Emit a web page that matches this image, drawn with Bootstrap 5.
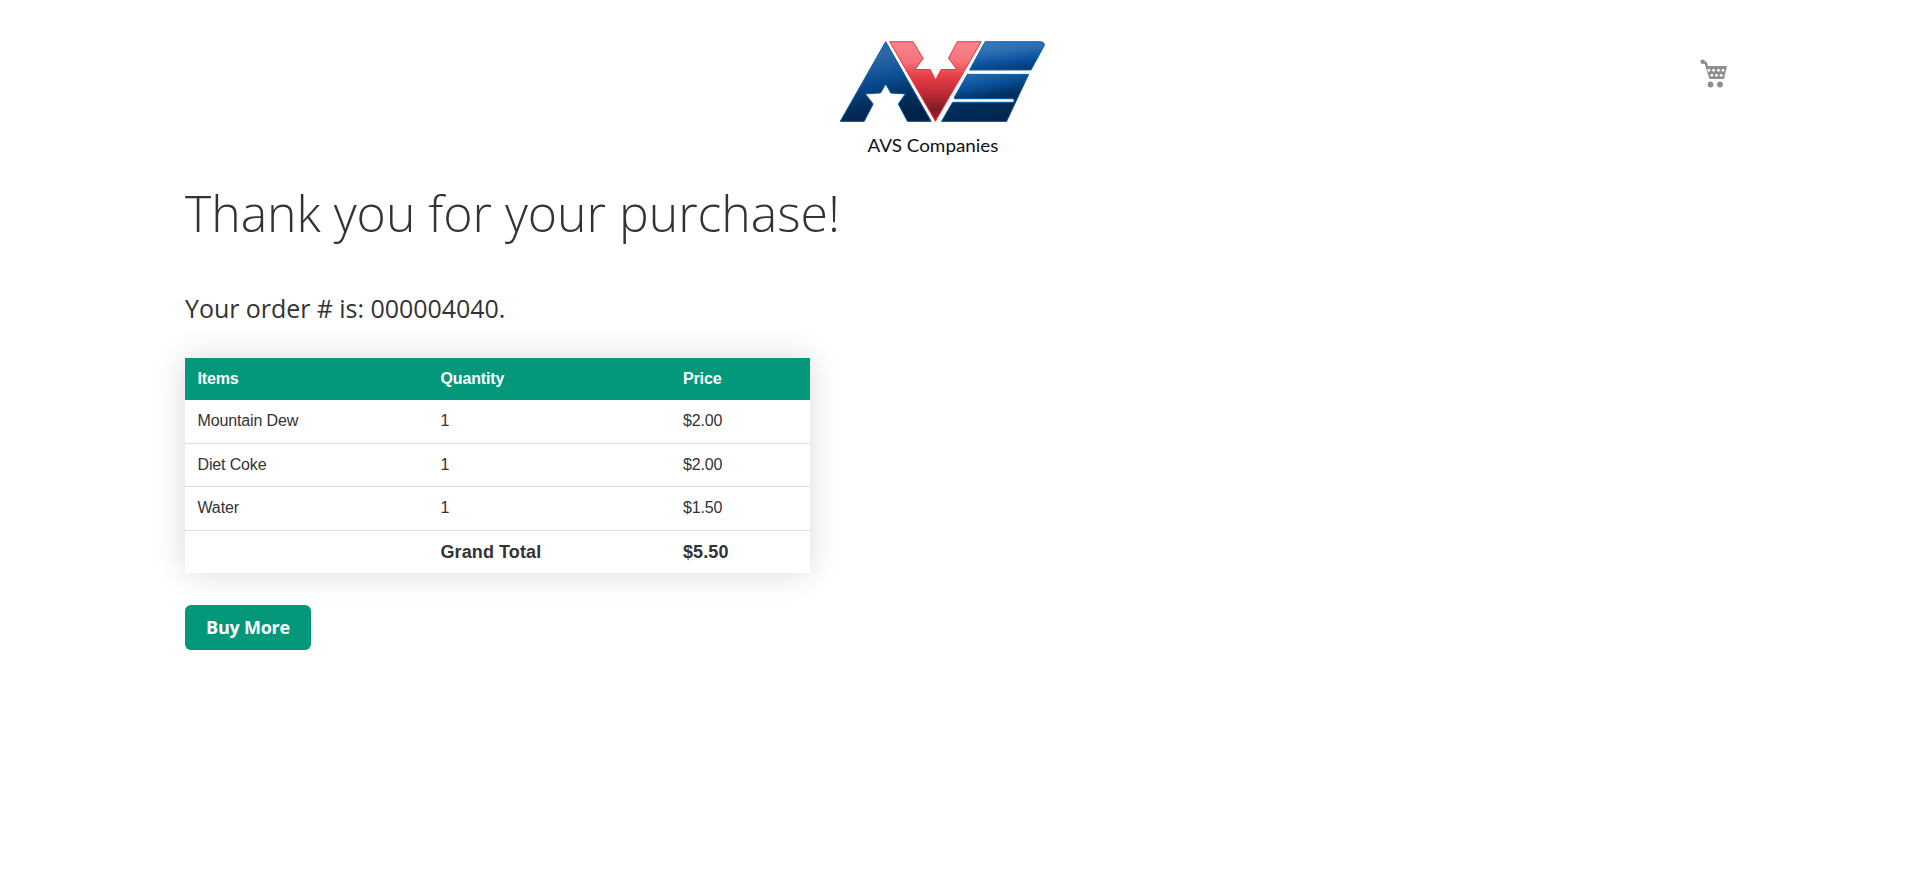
<!DOCTYPE html>
<html lang="en">
<head>
<meta charset="utf-8">
<meta name="viewport" content="width=device-width, initial-scale=1">
<title>Thank you for your purchase!</title>
<link href="https://cdn.jsdelivr.net/npm/bootstrap@5.3.0/dist/css/bootstrap.min.css" rel="stylesheet">
<style>
:root { --brand: #029879; --ink: #333; }
body { font-family: "Open Sans", sans-serif; color: var(--ink); background: #fff; }
.page-wrap { width: 1550px; }
.site-header { height: 170px; padding-top: 36px; }
.logo { margin-left: 650px; }
.logo-name { font-family: Lato, sans-serif; font-size: 17px; fill: #111; }
.cart-link { margin: 22px 7px 0 0; }
.page-title { font-size: 50px; font-weight: 300; line-height: 55px; margin-bottom: 50px; padding-top: 16px; letter-spacing: -.04px; white-space: nowrap; }
.order-no { font-size: 25px; line-height: 34px; margin-bottom: 33px; letter-spacing: -.05px; }
.order-table { width: 625px; table-layout: fixed; font-family: "Liberation Sans", Arial, sans-serif; font-size: 16px; line-height: 18px; letter-spacing: -.14px; color: var(--ink); box-shadow: 0 0 30px rgba(0,0,0,.15); background: #fff; }
.order-table th, .order-table td { padding: 0 12px 1px 12.5px; height: 43px; vertical-align: middle; }
.order-table thead th { background: var(--brand); color: #fff; height: 42px; font-weight: 700; padding-bottom: 0; }
.order-table tbody tr + tr td, .order-table tfoot td { border-top: 1px solid #ddd; }
.order-table tbody tr:nth-child(2) td { padding-bottom: 0; }
.order-table tbody tr:last-child td { height: 44px; }
.order-table td:last-child, .order-table th:last-child { padding-left: 13px; }
.order-table tfoot td { font-weight: 700; font-size: 18px; letter-spacing: .1px; padding-bottom: 0; }
.btn-brand { --bs-btn-color: #fff; --bs-btn-bg: var(--brand); --bs-btn-hover-color: #fff; --bs-btn-hover-bg: #02866b; width: 126px; height: 45px; margin-top: 32px; padding: 0; border: 0; border-radius: 6px; font-size: 18px; font-weight: 700; letter-spacing: -.25px; }
</style>
</head>
<body>
<div class="page-wrap mx-auto">
  <header class="site-header d-flex justify-content-between align-items-start">
    <a class="logo" href="#" aria-label="AVS Companies">
      <svg class="d-block" width="215" height="124" viewBox="835 36 215 124">
        <defs>
          <linearGradient id="blueA" x1="0" y1="0" x2=".25" y2="1"><stop offset="0" stop-color="#2a6cb0"/><stop offset=".3" stop-color="#2865a6"/><stop offset=".55" stop-color="#0b4c92"/><stop offset=".8" stop-color="#03305f"/><stop offset="1" stop-color="#022348"/></linearGradient>
          <linearGradient id="redV" x1="0" y1="0" x2="0" y2="1"><stop offset="0" stop-color="#f7868b"/><stop offset=".25" stop-color="#f4737a"/><stop offset=".42" stop-color="#e8404a"/><stop offset=".65" stop-color="#bd2a35"/><stop offset=".85" stop-color="#7e1c26"/><stop offset="1" stop-color="#b3222e"/></linearGradient>
          <linearGradient id="blueTop" x1="0" y1="0" x2=".35" y2="1"><stop offset="0" stop-color="#3a7fc0"/><stop offset=".45" stop-color="#2a6cb2"/><stop offset=".8" stop-color="#07509b"/><stop offset="1" stop-color="#023f80"/></linearGradient>
          <linearGradient id="blueMid" x1="0" y1="0" x2=".35" y2="1"><stop offset="0" stop-color="#3276b7"/><stop offset=".35" stop-color="#07529d"/><stop offset=".6" stop-color="#02305f"/><stop offset="1" stop-color="#01274f"/></linearGradient>
        </defs>
        <g stroke-width="1" stroke-linejoin="round">
          <path fill="url(#blueA)" stroke="#0c5ba6" d="M885.7 41.7 840.2 121.4H864.2L873.2 104 865.3 93.9 880.6 92.9 885.7 84 890.8 93.1 905.3 93.9 898.3 104 907.5 121.4H931.2Z"/>
          <path fill="url(#redV)" stroke="#e73945" d="M889.7 41.7H913L923.2 58.5 915 69.5H930.3L935.5 80 941 69.5H956.7L948.5 58 957.3 41.7H981.2L935.4 121.3Z"/>
          <path fill="url(#blueTop)" stroke="#1160ab" d="M985.2 41.7H1040Q1045.500 42 1044 46L1031 70H969.500Z"/>
          <path fill="url(#blueMid)" stroke="#0b59a4" d="M967.5 74.300H1028.700L1006.600 121.400H941.500L952.600 102.300H1013V98.700H955Q953.500 98.500 955 96Z"/>
          <path fill="none" stroke="#1160ab" stroke-width="4.200" stroke-linecap="round" d="M956 100.500H1012.500"/>
          <path fill="none" stroke="#fff" stroke-width="2.400" stroke-linecap="round" d="M972 72.200H1031M954 100.500H1012.500"/>
        </g>
        <text class="logo-name" x="867.500" y="151.800" textLength="131" lengthAdjust="spacingAndGlyphs">AVS Companies</text>
      </svg>
    </a>
    <a class="cart-link" href="#" aria-label="Cart">
      <svg class="d-block" width="28" height="30" viewBox="0 0 28 30">
        <circle cx="2.700" cy="3.800" r="2.300" fill="#8f8f8f"/>
        <path d="M3 3.800 5.800 5.200 10.500 19.800" fill="none" stroke="#8f8f8f" stroke-width="2.600"/>
        <path fill="#8f8f8f" d="M6 8H27L24 21H9.700Z"/>
        <g fill="#fff"><circle cx="8.800" cy="12.300" r="1.400"/><circle cx="13.600" cy="12.300" r="1.400"/><circle cx="18.400" cy="12.300" r="1.400"/><circle cx="23.000" cy="12.300" r="1.400"/><circle cx="11.800" cy="17.300" r="1.400"/><circle cx="16.500" cy="17.300" r="1.400"/><circle cx="21.200" cy="17.300" r="1.400"/></g>
        <circle cx="10.500" cy="26.500" r="2.900" fill="#8f8f8f"/><circle cx="20" cy="26.500" r="2.900" fill="#8f8f8f"/>
      </svg>
    </a>
  </header>
  <main>
    <h1 class="page-title">Thank you for your purchase!</h1>
    <p class="order-no">Your order # is: 000004040.</p>
    <table class="order-table">
      <colgroup><col style="width:243px"><col style="width:242px"><col style="width:140px"></colgroup>
      <thead><tr><th>Items</th><th>Quantity</th><th>Price</th></tr></thead>
      <tbody>
        <tr><td>Mountain Dew</td><td>1</td><td>$2.00</td></tr>
        <tr><td>Diet Coke</td><td>1</td><td>$2.00</td></tr>
        <tr><td>Water</td><td>1</td><td>$1.50</td></tr>
      </tbody>
      <tfoot><tr><td></td><td>Grand Total</td><td>$5.50</td></tr></tfoot>
    </table>
    <a class="btn btn-brand d-inline-flex align-items-center justify-content-center" href="#">Buy More</a>
  </main>
</div>
<script src="https://cdn.jsdelivr.net/npm/bootstrap@5.3.0/dist/js/bootstrap.bundle.min.js"></script>
</body>
</html>
